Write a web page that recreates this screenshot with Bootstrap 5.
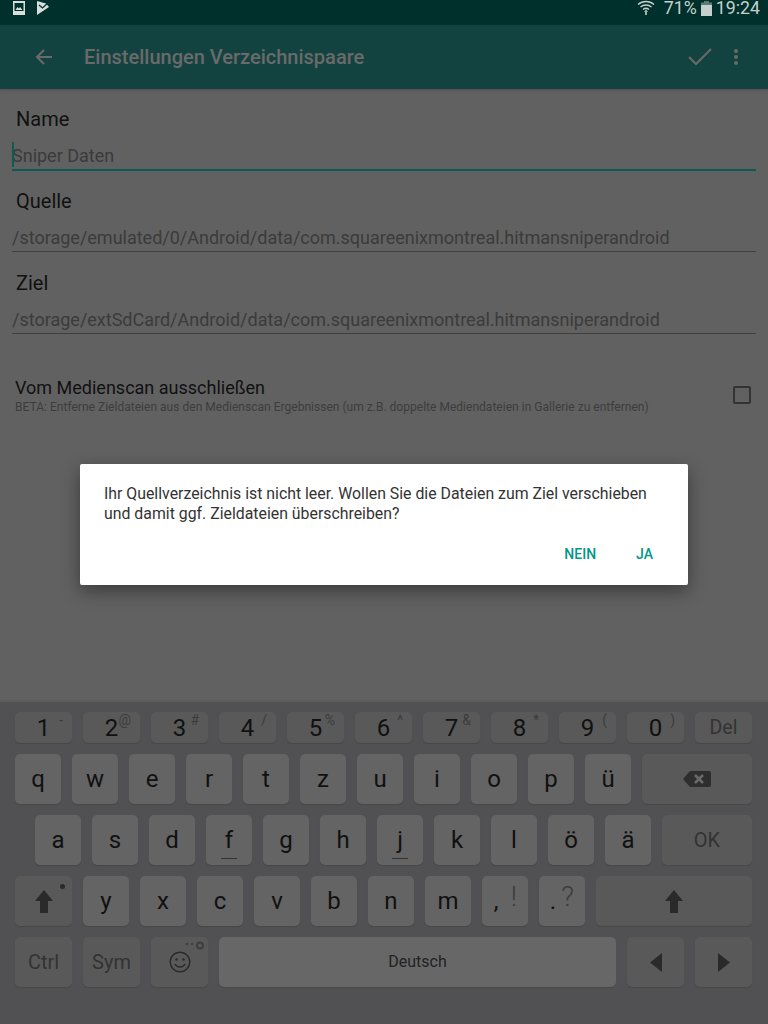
<!DOCTYPE html>
<html lang="de">
<head>
<meta charset="UTF-8">
<title>Einstellungen Verzeichnispaare</title>
<link href="https://cdn.jsdelivr.net/npm/bootstrap@5.3.2/dist/css/bootstrap.min.css" rel="stylesheet">
<style>
    html, body { margin: 0; height: 1024px; overflow: hidden; }
    body { font-family: Roboto, "Liberation Sans", sans-serif; background: #616161; position: relative; color: #111; }
    .status-strip { height: 25px; background: #00302c; color: #c5d0cd; font-size: 17.800px; line-height: 16px; padding: 0 8px 9px 0; }
    .status-first { margin-left: 12px; }
    .status-second { margin-left: 10px; }
    .status-pct { margin-left: 9px; }
    .app-strip { height: 64px; background: #134340; color: #6a6a6a; box-shadow: 0 1px 2px #505050; }
    .app-back { margin-left: 35px; }
    .app-title { font-size: 20px; font-weight: 500; margin-left: 31px; }
    .app-more { margin: 0 29px 0 20px; }
    .form-area { padding: 18px 12px 0; }
    .field-label { font-size: 20px; line-height: 24px; padding-left: 4px; }
    .field-value { font-size: 18px; line-height: 24px; color: #3b3b3b; height: 39px; padding-top: 13px; border-bottom: 1px solid #3f3f3f; margin-bottom: 19px; white-space: nowrap; }
    .field-active { height: 40px; margin-bottom: 18px; border-bottom: 2px solid #0d5c54; position: relative; }
    .text-caret { position: absolute; left: 0; top: 11px; width: 2px; height: 25px; background: #0d5c54; }
    .opt-row { margin-top: 43px; padding-left: 3px; }
    .opt-title { font-size: 18px; line-height: 22px; }
    .opt-sub { font-size: 12.05px; line-height: 16px; color: #3d3d3d; white-space: nowrap; }
    .opt-box { width: 18px; height: 18px; border: 2px solid #333; border-radius: 2px; margin: 0 5px 2px 0; }
    .dialog-box { position: absolute; left: 80px; top: 464px; width: 608px; height: 121px; background: #fff; border-radius: 2px; box-shadow: 0 6px 18px rgba(0,0,0,.4); padding: 20px 35px 0 24px; }
    .dialog-text { font-size: 15.85px; line-height: 20px; color: #333; white-space: nowrap; }
    .dialog-btn { font-size: 14px; font-weight: 500; color: #009688; line-height: 20px; margin-top: 20px; }
    .dialog-no { margin-right: 40px; }
    .kb-area { position: absolute; left: 0; right: 0; top: 700px; height: 324px; background: #515153; border-top: 2px solid #5c5c5c; padding: 10px 16px 0 15px; }
    .kb-line { display: flex; gap: 11px; margin-bottom: 11px; height: 50px; }
    .kb-line.nums { height: 31px; }
    .kb-line.home { padding-left: 20px; }
    .kk { width: 46px; border-radius: 5px; background: #646464; box-shadow: 0 1px 1px #474747; font-size: 24px; color: #111; display: flex; align-items: center; justify-content: center; position: relative; line-height: 1; }
    .kk.wide { width: 57px; }
    .kk.dark { background: #595959; }
    .kk.grow { flex: 1 1 0; }
    .kk.lite { background: #676767; }
    .kk.fn { color: #333; font-size: 20px; }
    .kk.punct { padding-right: 18px; }
    .nums .kk { font-size: 24px; }
    .nums .kk.fn { font-size: 19.500px; }
    .alt-mark { position: absolute; font-size: 14px; color: #3c3c3c; top: 1px; right: 9px; line-height: 1; }
    .alt-big { font-size: 28px; top: 7px; right: 11px; font-weight: 300; }
    .home-bar { position: absolute; left: 15px; right: 15px; bottom: 6px; height: 1px; background: #333; }
    .shift-dot { width: 5px; height: 5px; background: #2a2a2a; top: 8px; right: 7px; }
    .emoji-extra { top: 4px; right: 3px; }
    .space-label { font-size: 16px; color: #222; }
</style>
</head>
<body>
    <div class="status-strip d-flex align-items-center">
        <svg class="status-first" width="14" height="14" viewBox="0 0 14 14"><path fill="#d8dedc" d="M1 0h12v14H1z"/><path fill="#00302c" d="M2.500 2h9v8h-9z"/><path fill="#d8dedc" d="M3.500 9l2-3 1.500 1.500L8 6l2.500 3z"/></svg>
        <svg class="status-second" width="14" height="14" viewBox="0 0 14 14"><path fill="#d8dedc" d="M1 0l9 2.500 3 3.500L1 14z"/><path fill="none" stroke="#00302c" stroke-width="1.300" d="M3 4l3.500 3L13 1"/></svg>
        <div class="ms-auto d-flex align-items-center">
            <svg width="18" height="16" viewBox="0 0 18 16"><path fill="none" stroke="#c5d0cd" stroke-width="1.300" d="M1 4.500c4.500-4 11.500-4 16 0M3.500 7c3-2.700 8-2.700 11 0M6 9.500c1.700-1.400 4.300-1.400 6 0"/><path fill="#9fb0ac" d="M9 9l2 3H10v3H8v-3H7z"/></svg>
            <span class="status-pct">71%</span>
            <svg width="11" height="15" viewBox="0 0 11 15" class="mx-1"><path fill="#c5d0cd" d="M0 4h11v11H0z"/><path fill="#5d7a75" d="M3 0h5v1.500h3V4H0V1.500h3z"/></svg>
            <span>19:24</span>
        </div>
    </div>

    <div class="app-strip d-flex align-items-center">
        <svg class="app-back" width="18" height="16" viewBox="0 0 18 16"><path fill="none" stroke="#6a6a6a" stroke-width="2" d="M17 8H2M9 1L2 8l7 7"/></svg>
        <span class="app-title">Einstellungen Verzeichnispaare</span>
        <svg width="26" height="20" viewBox="0 0 26 20" class="ms-auto"><path fill="none" stroke="#6a6a6a" stroke-width="2" d="M2 10l7 7L24 2"/></svg>
        <svg class="app-more" width="6" height="18" viewBox="0 0 6 18"><circle cx="3" cy="3" r="2" fill="#6a6a6a"/><circle cx="3" cy="9" r="2" fill="#6a6a6a"/><circle cx="3" cy="15" r="2" fill="#6a6a6a"/></svg>
    </div>

    <div class="form-area">
        <div class="field-label">Name</div>
        <div class="field-value field-active"><span class="text-caret"></span>Sniper Daten</div>
        <div class="field-label">Quelle</div>
        <div class="field-value">/storage/emulated/0/Android/data/com.squareenixmontreal.hitmansniperandroid</div>
        <div class="field-label">Ziel</div>
        <div class="field-value">/storage/extSdCard/Android/data/com.squareenixmontreal.hitmansniperandroid</div>
        <div class="opt-row d-flex align-items-center">
            <div class="flex-grow-1">
                <div class="opt-title">Vom Medienscan ausschließen</div>
                <div class="opt-sub">BETA: Entferne Zieldateien aus den Medienscan Ergebnissen (um z.B. doppelte Mediendateien in Gallerie zu entfernen)</div>
            </div>
            <div class="opt-box"></div>
        </div>
    </div>

    <div class="dialog-box">
        <div class="dialog-text">Ihr Quellverzeichnis ist nicht leer. Wollen Sie die Dateien zum Ziel verschieben<br>und damit ggf. Zieldateien überschreiben?</div>
        <div class="d-flex justify-content-end dialog-btn">
            <span class="dialog-no">NEIN</span><span>JA</span>
        </div>
    </div>

    <div class="kb-area">
        <div class="kb-line nums">
            <div class="kk wide dark">1<span class="alt-mark">-</span></div>
            <div class="kk wide dark">2<span class="alt-mark">@</span></div>
            <div class="kk wide dark">3<span class="alt-mark">#</span></div>
            <div class="kk wide dark">4<span class="alt-mark">/</span></div>
            <div class="kk wide dark">5<span class="alt-mark">%</span></div>
            <div class="kk wide dark">6<span class="alt-mark">^</span></div>
            <div class="kk wide dark">7<span class="alt-mark">&amp;</span></div>
            <div class="kk wide dark">8<span class="alt-mark">*</span></div>
            <div class="kk wide dark">9<span class="alt-mark">(</span></div>
            <div class="kk wide dark">0<span class="alt-mark">)</span></div>
            <div class="kk wide dark fn">Del</div>
        </div>
        <div class="kb-line">
            <div class="kk">q</div><div class="kk">w</div><div class="kk">e</div><div class="kk">r</div><div class="kk">t</div><div class="kk">z</div><div class="kk">u</div><div class="kk">i</div><div class="kk">o</div><div class="kk">p</div><div class="kk">ü</div>
            <div class="kk dark grow">
                <svg width="28" height="16" viewBox="0 0 28 16"><path fill="#2e2e2e" d="M7 0h19a2 2 0 0 1 2 2v12a2 2 0 0 1-2 2H7L0 8z"/><path stroke="#6a6a6a" stroke-width="2.500" d="M12 4l8 8M20 4l-8 8"/></svg>
            </div>
        </div>
        <div class="kb-line home">
            <div class="kk">a</div><div class="kk">s</div><div class="kk">d</div><div class="kk">f<span class="home-bar"></span></div><div class="kk">g</div><div class="kk">h</div><div class="kk">j<span class="home-bar"></span></div><div class="kk">k</div><div class="kk">l</div><div class="kk">ö</div><div class="kk">ä</div>
            <div class="kk dark grow fn">OK</div>
        </div>
        <div class="kb-line">
            <div class="kk wide dark">
                <svg width="18" height="23" viewBox="0 0 18 23"><path fill="#2a2a2a" d="M9 0l9 11h-5v12H5V11H0z"/></svg>
                <span class="shift-dot position-absolute rounded-circle"></span>
            </div>
            <div class="kk">y</div><div class="kk">x</div><div class="kk">c</div><div class="kk">v</div><div class="kk">b</div><div class="kk">n</div><div class="kk">m</div>
            <div class="kk punct">,<span class="alt-mark alt-big">!</span></div>
            <div class="kk punct">.<span class="alt-mark alt-big">?</span></div>
            <div class="kk dark grow">
                <svg width="18" height="23" viewBox="0 0 18 23"><path fill="#2a2a2a" d="M9 0l9 11h-5v12H5V11H0z"/></svg>
            </div>
        </div>
        <div class="kb-line">
            <div class="kk wide dark fn">Ctrl</div>
            <div class="kk wide dark fn">Sym</div>
            <div class="kk wide dark">
                <svg width="22" height="22" viewBox="0 0 22 22"><circle cx="11" cy="11" r="9.800" fill="none" stroke="#2a2a2a" stroke-width="1.500"/><circle cx="7.500" cy="8.500" r="1.300" fill="#2a2a2a"/><circle cx="14.500" cy="8.500" r="1.300" fill="#2a2a2a"/><path fill="none" stroke="#2a2a2a" stroke-width="1.500" d="M6 13c2 4 8 4 10 0"/></svg>
                <svg class="emoji-extra position-absolute" width="20" height="9" viewBox="0 0 20 9"><circle cx="2" cy="3" r="1.200" fill="#3e3e3e"/><circle cx="7" cy="3" r="1.200" fill="#3e3e3e"/><circle cx="15" cy="4.500" r="3" fill="none" stroke="#3e3e3e" stroke-width="2"/></svg>
            </div>
            <div class="kk lite grow"><span class="space-label">Deutsch</span></div>
            <div class="kk wide dark"><svg width="12" height="19" viewBox="0 0 12 19"><path fill="#2a2a2a" d="M12 0v19L0 9.500z"/></svg></div>
            <div class="kk wide dark"><svg width="12" height="19" viewBox="0 0 12 19"><path fill="#2a2a2a" d="M0 0v19l12-9.500z"/></svg></div>
        </div>
    </div>
    <script src="https://cdn.jsdelivr.net/npm/bootstrap@5.3.2/dist/js/bootstrap.bundle.min.js"></script>
</body>
</html>
